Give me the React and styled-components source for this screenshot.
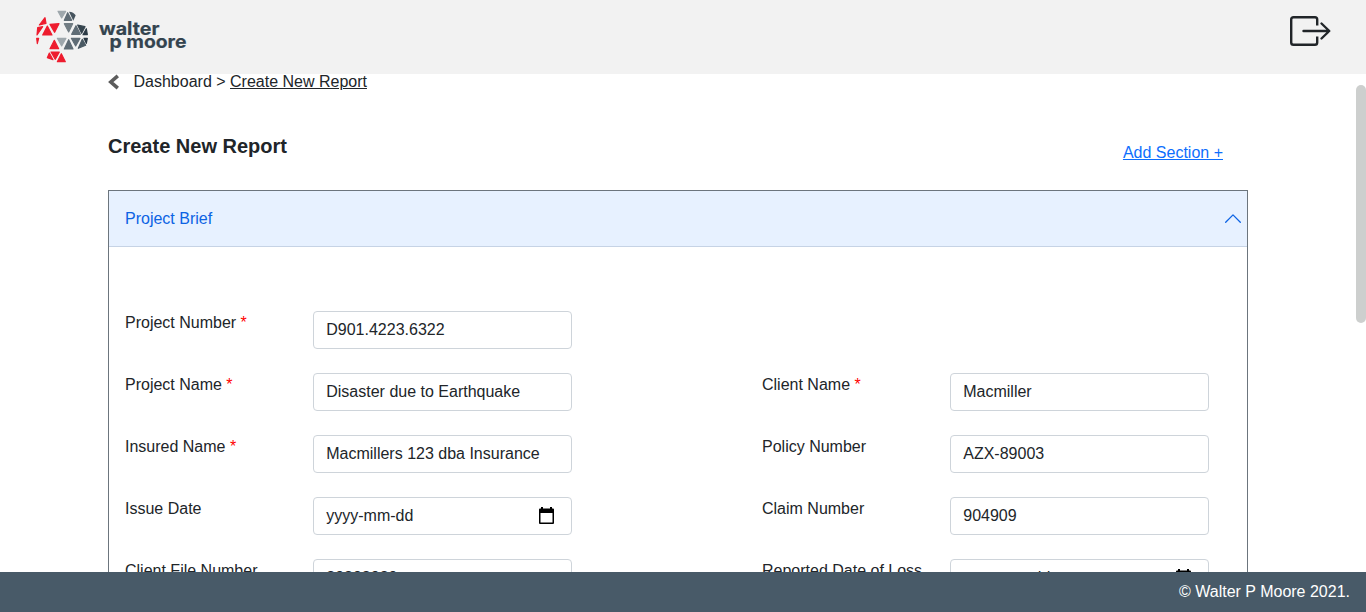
import React from 'react';
import styled, { createGlobalStyle } from 'styled-components';

const GlobalStyle = createGlobalStyle`
  *, *::before, *::after { box-sizing: border-box; }
  body {
    margin: 0;
    font-family: "Liberation Sans", Arial, sans-serif;
    font-size: 16px;
    line-height: 24px;
    color: #212529;
    background: #fff;
  }
`;

const Page = styled.div`
  display: flex;
  flex-direction: column;
  height: 100vh;
  overflow: hidden;
`;

const Header = styled.header`
  flex: none;
  display: flex;
  justify-content: space-between;
  align-items: flex-start;
  height: 74px;
  padding: 0 35.5px 0 25px;
  background: #f2f2f2;
`;

const LogoSvg = styled.svg`
  display: block;
  font-family: Inter, "Liberation Sans", sans-serif;
  font-weight: 700;
`;

const LogoutButton = styled.a`
  display: block;
  margin-top: 15px;
  svg { display: block; }
`;

const Body = styled.div`
  flex: 1;
  min-height: 0;
  display: flex;
  overflow: hidden;
`;

const Content = styled.main`
  flex: 1;
  min-width: 0;
  padding: 0 108px;
`;

const Rail = styled.div`
  flex: none;
  width: 10px;
  padding-top: 11px;
`;

const Thumb = styled.div`
  height: 238px;
  border-radius: 5px;
  background: #cdcfce;
`;

const Breadcrumb = styled.nav`
  display: flex;
  align-items: center;
  height: 24px;
  margin-top: -4px;
  white-space: pre;
  svg { margin: 0 13.5px 0 0; }
`;

const Current = styled.span`
  text-decoration: underline;
`;

const TitleRow = styled.div`
  display: flex;
  justify-content: space-between;
  align-items: flex-start;
  width: 1115px;
  height: 30px;
  margin-top: 40px;
`;

const Title = styled.h1`
  margin: 0;
  font-size: 20px;
  line-height: 24px;
  font-weight: 700;
`;

const AddLink = styled.a`
  margin-top: 7px;
  color: #0d6efd;
  text-decoration: underline;
`;

const Card = styled.section`
  width: 1140px;
  margin-top: 26px;
  border: 1px solid #6c757d;
`;

const CardHeader = styled.div`
  display: flex;
  justify-content: space-between;
  align-items: center;
  height: 56px;
  padding: 0 6px 0 16px;
  color: #0c63e4;
  background: #e7f1ff;
  border-bottom: 1px solid #c6d3e5;
`;

const Grid = styled.div`
  display: grid;
  grid-template-columns: 447px 447px;
  column-gap: 190px;
  row-gap: 24px;
  padding: 64px 16px 24px;
`;

const FieldRow = styled.div`
  display: grid;
  grid-template-columns: 188px 259px;
  grid-column: ${(p) => (p.$right ? 2 : 1)};
`;

const Label = styled.label`
  white-space: nowrap;
`;

const Star = styled.span`
  color: #f00;
`;

const Control = styled.div`
  display: flex;
  justify-content: space-between;
  align-items: center;
  height: 38px;
  padding: 0 16px 0 12.25px;
  border: 1px solid #ced4da;
  border-radius: 4px;
  background: #fff;
  white-space: nowrap;
  svg { margin-bottom: 2px; }
`;

const Footer = styled.footer`
  flex: none;
  height: 40px;
  padding: 8px 16px;
  text-align: right;
  color: #fff;
  background: #485a68;
`;

const triangles = [
  ['#9ea7ac', '99,34 122,34 110,54'],
  ['#5f6c75', '128,38 140,61 118,61'],
  ['#727d84', '118,71 143,71 131,96'],
  ['#5f6c75', '153,77 166,103 140,103'],
  ['#36454f', '158,75 180,80 170,100'],
  ['#2b3a45', '184,86 187,104 174,104'],
  ['#9ea7ac', '97,115 123,115 110,138'],
  ['#5f6c75', '131,119 144,147 118,147'],
  ['#5f6c75', '139,115 165,115 152,138'],
  ['#4a5963', '172,118 182,136 160,145'],
  ['#2b3a45', '177,115 187,115 184,130'],
  ['#ee1c2e', '60,53 63,70 43,75'],
  ['#ee1c2e', '38,83 53,80 36,105'],
  ['#ee1c2e', '67,78 81,105 53,105'],
  ['#ee1c2e', '75,73 102,71 89,97'],
  ['#ee1c2e', '35,115 41,115 37,131'],
  ['#ee1c2e', '88,121 101,146 75,146'],
  ['#ee1c2e', '78,156 103,156 91,178'],
  ['#ee1c2e', '73,159 84,179 67,173'],
  ['#ee1c2e', '109,161 121,185 97,185'],
];

const Logo = () => (
  <LogoSvg width="175" height="74" viewBox="0 0 175 74" role="img" aria-label="Walter P Moore">
    <g transform="scale(0.33333)">
      {triangles.map(([fill, points]) => (
        <polygon key={points} fill={fill} stroke={fill} strokeWidth="3.5" strokeLinejoin="round" points={points} />
      ))}
      <path fill="#46545e" d="M132 35Q146 36 152 46L145 62Z" />
    </g>
    <g fill="#34444f" stroke="#34444f" strokeWidth="0.2" fontSize="18.2">
      <text x="74" y="35" textLength="60.5" lengthAdjust="spacingAndGlyphs">walter</text>
      <text x="84.5" y="47.8" textLength="77" lengthAdjust="spacingAndGlyphs">p moore</text>
    </g>
  </LogoSvg>
);

const LogoutIcon = () => (
  <svg width="41" height="32" viewBox="0 0 41 32" fill="none" stroke="#212529" strokeWidth="2.4" strokeLinecap="butt" strokeLinejoin="round">
    <path d="M27.2 10.5V4.5Q27.2 2.2 25 2.2H3.5Q1.2 2.2 1.2 4.5V27.5Q1.2 29.8 3.5 29.8H25Q27.2 29.8 27.2 27.5V21.5" />
    <path strokeLinecap="round" d="M13.5 16H39M31.5 8.5L39.3 16L31.5 23.5" />
  </svg>
);

const BackIcon = () => (
  <svg width="12" height="16" viewBox="0 0 12 16" fill="none" stroke="#5c5c5c" strokeWidth="3.6">
    <path d="M9.8 1.8L2.8 8L9.8 14.2" />
  </svg>
);

const ChevronUp = () => (
  <svg width="16" height="9" viewBox="0 0 16 9" fill="none" stroke="#0c63e4" strokeWidth="1.3" strokeLinecap="round" strokeLinejoin="round">
    <path d="M0.7 8.2L8 0.9L15.3 8.2" />
  </svg>
);

const CalendarIcon = () => (
  <svg width="17" height="17" viewBox="0 0 17 17" fill="#000">
    <path fillRule="evenodd" d="M3 0H5V1.5H12V0H14V1.5H15Q16 1.5 16 2.5V16Q16 17 15 17H2Q1 17 1 16V2.5Q1 1.5 2 1.5H3ZM2.5 6V15.5H14.5V6Z" />
  </svg>
);

const fields = [
  { label: 'Project Number', required: true, value: 'D901.4223.6322' },
  { label: 'Project Name', required: true, value: 'Disaster due to Earthquake' },
  { label: 'Client Name', required: true, value: 'Macmiller', right: true },
  { label: 'Insured Name', required: true, value: 'Macmillers 123 dba Insurance' },
  { label: 'Policy Number', value: 'AZX-89003', right: true },
  { label: 'Issue Date', value: 'yyyy-mm-dd', date: true },
  { label: 'Claim Number', value: '904909', right: true },
  { label: 'Client File Number', value: '89898989' },
  { label: 'Reported Date of Loss', value: 'yyyy-mm-dd', date: true, right: true },
];

const Field = ({ label, required, value, date, right }) => (
  <FieldRow $right={right}>
    <Label>
      {label}
      {required && <Star> *</Star>}
    </Label>
    <Control>
      {value}
      {date && <CalendarIcon />}
    </Control>
  </FieldRow>
);

export default function App() {
  return (
    <Page>
      <GlobalStyle />
      <Header>
        <Logo />
        <LogoutButton aria-label="Log out">
          <LogoutIcon />
        </LogoutButton>
      </Header>
      <Body>
        <Content>
          <Breadcrumb>
            <BackIcon />
            <span>Dashboard &gt; </span>
            <Current>Create New Report</Current>
          </Breadcrumb>
          <TitleRow>
            <Title>Create New Report</Title>
            <AddLink>Add Section +</AddLink>
          </TitleRow>
          <Card>
            <CardHeader>
              Project Brief
              <ChevronUp />
            </CardHeader>
            <Grid>
              {fields.map((f) => (
                <Field key={f.label} {...f} />
              ))}
            </Grid>
          </Card>
        </Content>
        <Rail>
          <Thumb />
        </Rail>
      </Body>
      <Footer>© Walter P Moore 2021.</Footer>
    </Page>
  );
}
